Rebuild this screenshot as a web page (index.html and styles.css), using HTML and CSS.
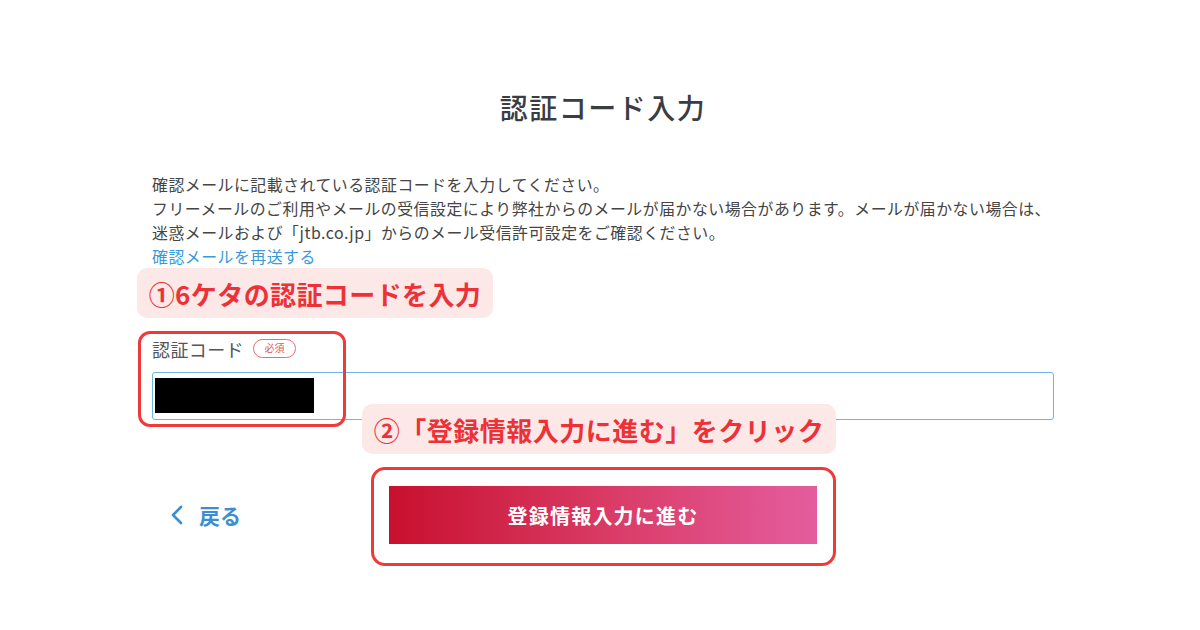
FILE: index.html
```html
<!DOCTYPE html>
<html lang="ja">
<head>
<meta charset="utf-8">
<link rel="stylesheet" href="styles.css">
</head>
<body>
<div class="page">
  <main class="content">
    <h1 class="title">認証コード入力</h1>
    <div class="desc">
      <p>確認メールに記載されている認証コードを入力してください。</p>
      <p>フリーメールのご利用やメールの受信設定により弊社からのメールが届かない場合があります。メールが届かない場合は、</p>
      <p>迷惑メールおよび「jtb.co.jp」からのメール受信許可設定をご確認ください。</p>
      <p><a class="resend" href="#">確認メールを再送する</a></p>
    </div>
    <div class="field">
      <div class="label">認証コード<span class="badge">必須</span></div>
      <div class="input"><span class="redact"></span></div>
    </div>
    <div class="actions">
      <a class="back" href="#">
        <svg class="chev" width="14" height="20" viewBox="0 0 14 20"><path d="M11 2 L3 10 L11 18" fill="none" stroke="#3a8fd3" stroke-width="2.6" stroke-linecap="round" stroke-linejoin="round"/></svg>
        <span>戻る</span>
      </a>
      <button class="next">登録情報入力に進む</button>
    </div>
  </main>
  <div class="note note1">①6ケタの認証コードを入力</div>
  <div class="frame frame1"></div>
  <div class="note note2">②「登録情報入力に進む」をクリック</div>
  <div class="frame frame2"></div>
</div>
</body>
</html>
```

FILE: styles.css
```css
* { box-sizing: border-box; }
html, body { margin: 0; padding: 0; background: #fff; }
body {
  font-family: "Noto Sans CJK JP", "Noto Sans", sans-serif;
  width: 1200px;
  height: 630px;
  overflow: hidden;
}
.page { position: relative; width: 1200px; height: 630px; }
.content {
  margin-left: 152px;
  width: 902px;
  padding-top: 87px;
}
.title {
  margin: 0;
  text-align: center;
  font-size: 28px;
  line-height: 40px;
  font-weight: 500;
  color: #3a3d43;
  letter-spacing: 1.5px;
}
.desc {
  margin-top: 46px;
  color: #454545;
  font-size: 15.9px;
  line-height: 24px;
  letter-spacing: 0.5px;
}
.desc p { margin: 0; white-space: nowrap; }
.resend { color: #3a9ad9; text-decoration: none; }
.field { margin-top: 68px; }
.label {
  display: flex;
  align-items: center;
  font-size: 18px;
  line-height: 24px;
  color: #555;
  height: 24px;
  letter-spacing: 0.4px;
}
.badge {
  display: inline-flex;
  align-items: center;
  justify-content: center;
  margin-left: 9px;
  width: 43px;
  height: 19px;
  border: 1px solid #e07272;
  border-radius: 10px;
  color: #d85a5a;
  font-size: 10px;
  line-height: 1;
  letter-spacing: 0;
  position: relative;
  top: -1px;
}
.input {
  margin-top: 11px;
  height: 48px;
  border: 1px solid #6fb6e3;
  border-radius: 3px;
  padding: 5px 2px;
}
.redact { display: block; width: 159px; height: 35px; background: #000; }
.actions {
  margin-top: 66px;
  display: flex;
  align-items: center;
}
.back {
  width: 237px;
  padding-left: 18px;
  display: flex;
  align-items: center;
  gap: 15px;
  color: #3a8fd3;
  text-decoration: none;
  font-size: 21px;
  font-weight: 700;
}
.chev { display: block; }
.next {
  width: 428px;
  height: 58px;
  border: 0;
  background: linear-gradient(90deg, #c8102e 0%, #d93a64 50%, #e45d9e 100%);
  color: #fff;
  font-family: inherit;
  font-size: 20px;
  font-weight: 700;
  letter-spacing: 1.2px;
}
.note {
  position: absolute;
  background: #fde8e8;
  color: #ec3237;
  font-weight: 700;
  font-size: 26px;
  display: flex;
  align-items: center;
  justify-content: center;
  border-radius: 10px;
  white-space: nowrap;
  letter-spacing: 0.4px;
}
.note1 { left: 137px; top: 268px; width: 356px; height: 50px; }
.note2 { left: 362px; top: 404px; width: 474px; height: 50px; letter-spacing: 0.5px; }
.frame {
  position: absolute;
  border: 3px solid #f03a3a;
}
.frame1 { left: 138px; top: 331px; width: 208px; height: 96px; border-radius: 12px; }
.frame2 { left: 371px; top: 467px; width: 465px; height: 99px; border-radius: 14px; }
```
